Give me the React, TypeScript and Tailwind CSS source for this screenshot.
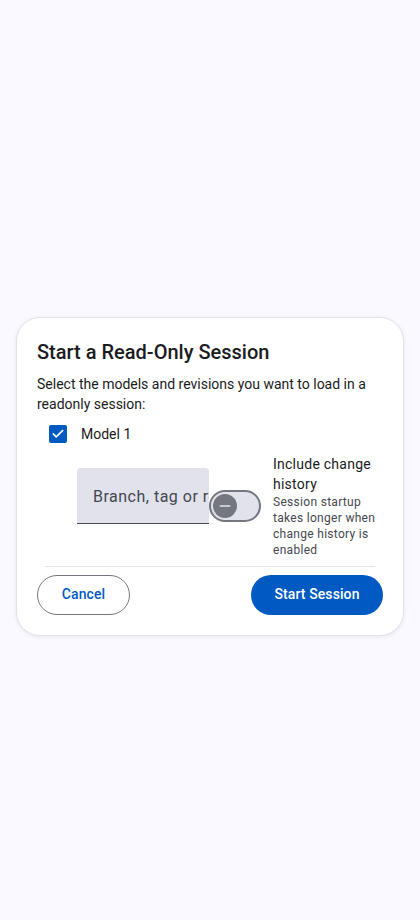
import { Check, Minus } from "lucide-react";

export default function App() {
  return (
    <div
      className="min-h-screen bg-[#f9f9ff] flex items-center justify-center pt-8 px-4"
      style={{ fontFamily: "Roboto, 'Noto Sans', sans-serif" }}
    >
      <div className="w-[388px] rounded-[24px] border border-[#e2e2e9] bg-white p-5 shadow-[0_1px_4px_rgba(0,0,0,0.08)]">
        <h2 className="text-[20px] leading-7 font-medium text-[#1a1b20]">Start a Read-Only Session</h2>
        <p className="mt-2 text-sm leading-5 text-[#1a1b20]">
          Select the models and revisions you want to load in a readonly session:
        </p>

        <div className="flex items-center">
          <div className="w-10 h-10 flex items-center justify-center ml-[1px]">
            <div className="w-[18px] h-[18px] rounded-[2px] bg-[#005ac1] flex items-center justify-center">
              <Check className="w-[14px] h-[14px] text-white" strokeWidth={3} />
            </div>
          </div>
          <span className="ml-[3px] text-sm text-[#1a1b20]">Model 1</span>
        </div>

        <div className="flex items-center pl-10">
          <div className="flex flex-col pb-5">
            <div className="w-[132px] h-[56px] bg-[#e1e2ec] rounded-t-[4px] border-b border-[#44474f] flex items-center pl-4 pt-[3px] overflow-hidden">
              <span className="whitespace-nowrap text-base tracking-[0.5px] text-[#44474f]">Branch, tag or revision</span>
            </div>
          </div>
          <div className="w-[52px] h-8 shrink-0 rounded-full border-2 border-[#74777f] bg-[#e1e2ec] flex items-center pl-[2px]">
            <div className="w-6 h-6 rounded-full bg-[#74777f] flex items-center justify-center">
              <Minus className="w-4 h-4 text-[#e1e2ec]" strokeWidth={2.5} />
            </div>
          </div>
          <div className="ml-3 w-[112px] flex flex-col">
            <span className="text-sm leading-5 tracking-[0.25px] text-[#1a1b20]">Include change history</span>
            <span className="text-xs leading-4 tracking-[0.3px] text-[#44474f]">
              Session startup takes longer when change history is enabled
            </span>
          </div>
        </div>

        <div className="mx-2 mt-2 h-px bg-[#e2e2e9]"></div>

        <div className="mt-2 flex items-center justify-between">
          <button className="h-10 w-[93px] rounded-full border border-[#74777f] pb-[2px] text-sm font-medium tracking-[0.1px] text-[#005ac1]">
            Cancel
          </button>
          <button className="h-10 w-[132px] rounded-full bg-[#005ac1] pb-[2px] text-sm font-medium tracking-[0.1px] text-white">
            Start Session
          </button>
        </div>
      </div>
    </div>
  );
}
